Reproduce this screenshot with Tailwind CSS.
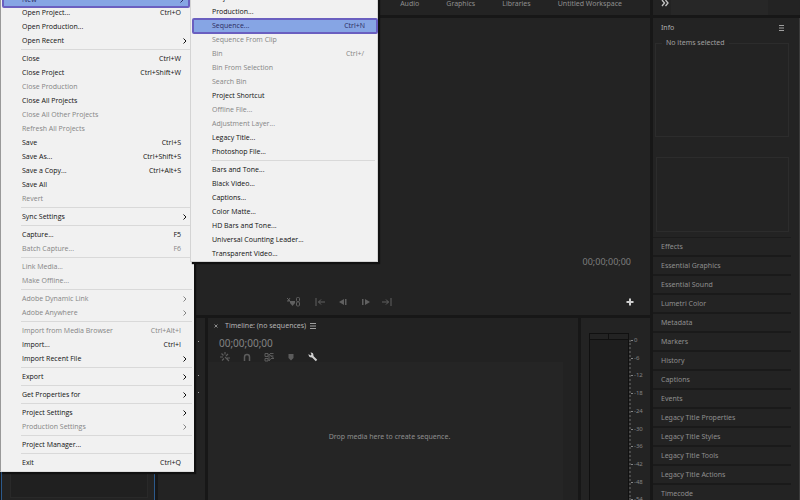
<!DOCTYPE html>
<html lang="en">
<head>
  <meta charset="UTF-8" />
  <meta name="viewport" content="width=device-width, initial-scale=1.0"/>
  <title>Premiere Pro</title>
  <script src="https://cdn.jsdelivr.net/npm/@tailwindcss/browser@4"></script>
</head>
<body class="relative h-screen overflow-hidden flex flex-col bg-[#171717] text-[#8f8f8f] font-['Noto_Sans',sans-serif] text-[7px] leading-[14px]">

  <!-- Workspace bar -->
  <header class="flex h-[15px] shrink-0 gap-[3px] mb-[3px] bg-[#171717]">
    <nav class="flex-1 flex justify-end gap-[27px] pr-7 bg-[#232323]">
      <a href="#" class="-mt-[3px]">Audio</a>
      <a href="#" class="-mt-[3px]">Graphics</a>
      <a href="#" class="-mt-[3px]">Libraries</a>
      <a href="#" class="-mt-[3px]">Untitled Workspace</a>
    </nav>
    <div class="w-[147px] flex bg-[#232323]">
      <button aria-label="More workspaces" class="w-[18px] flex justify-end">
        <svg class="w-2 h-2 mr-[2px] -mt-px" viewBox="0 0 8 8" fill="none" stroke="#c4c4c4" stroke-width="1.3"><path d="M1 1l2.500 3L1 7M4.500 1L7 4 4.500 7"/></svg>
      </button>
      <div class="w-[97px] bg-[#272727]"></div>
    </div>
  </header>

  <main class="flex-1 min-h-0 flex gap-[3px]">
    <div class="flex-1 min-w-0 flex flex-col gap-[3px]">

      <!-- Program monitor -->
      <section class="h-[297px] shrink-0 flex flex-col justify-end bg-[#232323]">
        <div class="flex justify-end pr-[19px] text-[9px] text-[#7d7d7d]">00;00;00;00</div>
        <div class="mt-7 mb-2 flex items-center pl-[286px] pr-4 text-[#606060]">
          <button aria-label="Marker options" class="mr-[14px]">
            <svg class="w-[15px] h-[10px]" viewBox="0 0 15 10" fill="none" stroke="currentColor"><path d="M1 1l3 3M4 1L2 4M1 4h3"/><path d="M4 4h5v2L6.500 9 4 6z" fill="currentColor" stroke="none"/><rect x="10.500" y="0.500" width="3" height="4" rx="1"/><rect x="10.500" y="5" width="3" height="4" rx="1"/></svg>
          </button>
          <button aria-label="Go to in" class="mr-[13px]">
            <svg class="w-[10px] h-[10px]" viewBox="0 0 10 10" fill="none" stroke="currentColor"><path d="M1 1v8M3.500 5H10M6 2.500L3.500 5 6 7.500"/></svg>
          </button>
          <button aria-label="Step back" class="mr-[13px]">
            <svg class="w-[10px] h-[10px]" viewBox="0 0 10 10" fill="currentColor"><path d="M6 2v6L1 5zM7 2h1.500v6H7z"/></svg>
          </button>
          <button aria-label="Step forward" class="mr-[11px]">
            <svg class="w-[10px] h-[10px]" viewBox="0 0 10 10" fill="currentColor"><path d="M4 2v6l5-3zM1 2h1.500v6H1z"/></svg>
          </button>
          <button aria-label="Go to out">
            <svg class="w-[10px] h-[10px]" viewBox="0 0 10 10" fill="none" stroke="currentColor"><path d="M9 1v8M0 5h6.500M4 2.500L6.500 5 4 7.500"/></svg>
          </button>
          <button aria-label="Add button" class="ml-auto">
            <svg class="w-2 h-2" viewBox="0 0 8 8" stroke="#cfcfcf" stroke-width="2"><path d="M4 0.500v7M0.500 4h7"/></svg>
          </button>
        </div>
      </section>

      <div class="flex-1 min-h-0 flex gap-[3px]">
        <!-- Project bin -->
        <section class="w-[154px] shrink-0 ml-px pl-2 pr-[6px] pb-[2px] border-x border-[#2c5a8c] bg-[#232323]">
          <div class="h-full border border-[#292929] bg-[#202020]"></div>
        </section>

        <!-- Tools -->
        <section class="flex-none w-[47px] flex bg-[#232323]">
          <svg class="w-[46px] h-20" viewBox="0 0 46 80" fill="#a0a0a0"><path d="M37 17h1v2h-1zM40 23h1v1h-1zM37 36h1v2h-1zM37 49h1v2h-1zM40 57h1v1h-1zM37 65h1v2h-1zM40 74h1v1h-1z"/></svg>
        </section>

        <!-- Timeline -->
        <section class="flex-1 min-w-0 flex flex-col bg-[#222222]">
          <div class="flex items-center mt-px pl-[6px] text-[#b5b5b5]">
            <button aria-label="Close tab" class="mr-[7px]"><svg class="w-1 h-1" viewBox="0 0 4 4" stroke="#8a8a8a"><path d="M0.500 0.500l3 3M3.500 0.500l-3 3"/></svg></button>
            <span>Timeline: (no sequences)</span>
            <button aria-label="Timeline menu" class="ml-1"><svg class="w-[6px] h-[6px]" viewBox="0 0 6 6" stroke="#a0a0a0"><path d="M0 0.500h6M0 3h6M0 5.500h6"/></svg></button>
          </div>
          <div class="mt-[3px] pl-[11px] text-[10px] text-[#828282]">00;00;00;00</div>
          <div class="flex items-center gap-3 mt-[2px] pl-3 text-[#5c5c5c]">
            <button aria-label="Nest sequences"><svg class="w-[10px] h-[10px]" viewBox="0 0 10 10" stroke="currentColor" stroke-width="1.200"><path d="M0 5h3M1.500 1.500l2 2M5 0v2.500M5 5l4 4M6 4l2-2M7 6h3M2 8.500l2-2"/></svg></button>
            <button aria-label="Snap"><svg class="w-[10px] h-[10px]" viewBox="0 0 10 10" fill="none" stroke="currentColor" stroke-width="1.500"><path d="M2.500 9V5a2.500 2.500 0 0 1 5 0v4"/></svg></button>
            <button aria-label="Linked selection"><svg class="w-[10px] h-[10px]" viewBox="0 0 10 10" fill="none" stroke="currentColor"><path d="M1 1.500h3v3H1zM6 1.500h3.500M1 6.500h3v2.500H1zM5 2v7l2-2.500h3zM6.500 4h3"/></svg></button>
            <button aria-label="Add marker"><svg class="w-[10px] h-[10px]" viewBox="0 0 10 10" fill="currentColor"><path d="M2.500 2h5v4L5 8.500 2.500 6z"/></svg></button>
            <button aria-label="Timeline settings"><svg class="w-[10px] h-[10px]" viewBox="0 0 10 10"><path d="M4 4l4.500 4.500" stroke="#d0d0d0" stroke-width="2"/><path d="M0.500 2L2.500 3.500 3.500 2.500 2.500 0.500Q5.500 0 5.500 3 5.500 5.500 3 5.500 0.500 5 0.500 2z" fill="#d0d0d0"/></svg></button>
          </div>
          <div class="flex-1 flex items-center justify-center mr-[15px] pt-3 pl-2 bg-[#252525]">Drop media here to create sequence.</div>
        </section>

        <!-- Audio meters -->
        <section class="w-[69px] shrink-0 flex pl-2 pt-[15px] overflow-hidden bg-[#232323]">
          <div class="w-10 flex flex-col border border-b-0 border-[#101010] bg-[#1e1e1e]">
            <div class="h-[6px] shrink-0 grid grid-cols-2 divide-x divide-[#101010] border-b border-[#101010] bg-[#232323]"><span></span><span></span></div>
          </div>
          <div class="w-px mt-[7px] border-l-2 border-dotted border-[#484848]"></div>
          <div id="scale" class="flex-1 flex flex-col -mb-[10px] text-[6px] text-[#858585]"></div>
        </section>
      </div>
    </div>

    <!-- Panel stack -->
    <aside class="w-[147px] shrink-0 border-r border-[#3a3a3a] bg-[#232323]">
      <div class="flex items-center justify-between pt-[3px] pl-2 pr-[15px] text-[#b0b0b0]">
        <span>Info</span>
        <button aria-label="Info menu"><svg class="w-[5px] h-[6px]" viewBox="0 0 5 6" stroke="#a0a0a0"><path d="M0 0.500h5M0 3h5M0 5.500h5"/></svg></button>
      </div>
      <fieldset class="h-[101px] ml-[2px] mr-[10px] mt-px px-[6px] border border-[#2c2c2c]">
        <legend class="px-1 text-[#a0a0a0]">No items selected</legend>
      </fieldset>
      <div class="h-[75px] ml-[3px] mr-[10px] mt-5 mb-[5px] border border-[#2c2c2c]"></div>
      <div id="panels" class="mr-2 border-t border-[#1b1b1b]"></div>
    </aside>
  </main>

  <!-- File menu -->
  <div id="fileMenu" role="menu" class="absolute -top-2 left-0 w-[194px] pb-px border-l border-b border-l-[#999999] border-b-[#dddddd] bg-[#f1f1f1] text-[#101010] font-['Open_Sans',sans-serif] shadow-[2px_2px_1px_#111111]"></div>

  <!-- File > New submenu -->
  <div id="newMenu" role="menu" class="absolute -top-[9px] left-[190px] w-[188px] border border-t-0 border-[#d4d4d4] bg-[#f1f1f1] text-[#101010] font-['Open_Sans',sans-serif] shadow-[2px_2px_1px_#111111]"></div>

  <script>
    // [label, shortcut ('>' opens a submenu), state], null is a separator
    const fileItems = [
      ['New', '>', 'new'], ['Open Project...', 'Ctrl+O'], ['Open Production...'], ['Open Recent', '>'],
      null,
      ['Close', 'Ctrl+W'], ['Close Project', 'Ctrl+Shift+W'], ['Close Production', '', 'off'], ['Close All Projects'],
      ['Close All Other Projects', '', 'off'], ['Refresh All Projects', '', 'off'], ['Save', 'Ctrl+S'],
      ['Save As...', 'Ctrl+Shift+S'], ['Save a Copy...', 'Ctrl+Alt+S'], ['Save All'], ['Revert', '', 'off'],
      null,
      ['Sync Settings', '>'],
      null,
      ['Capture...', 'F5'], ['Batch Capture...', 'F6', 'off'],
      null,
      ['Link Media...', '', 'off'], ['Make Offline...', '', 'off'],
      null,
      ['Adobe Dynamic Link', '>', 'off'], ['Adobe Anywhere', '>', 'off'],
      null,
      ['Import from Media Browser', 'Ctrl+Alt+I', 'off'], ['Import...', 'Ctrl+I'], ['Import Recent File', '>'],
      null,
      ['Export', '>'],
      null,
      ['Get Properties for', '>'],
      null,
      ['Project Settings', '>'], ['Production Settings', '>', 'off'],
      null,
      ['Project Manager...'],
      null,
      ['Exit', 'Ctrl+Q']
    ];

    const newItems = [
      ['Project...', 'Ctrl+Alt+N'], ['Production...'], ['Sequence...', 'Ctrl+N', 'on'], ['Sequence From Clip', '', 'off'],
      ['Bin', 'Ctrl+/', 'off'], ['Bin From Selection', '', 'off'], ['Search Bin', '', 'off'], ['Project Shortcut'],
      ['Offline File...', '', 'off'], ['Adjustment Layer...', '', 'off'], ['Legacy Title...'], ['Photoshop File...'],
      null,
      ['Bars and Tone...'], ['Black Video...'], ['Captions...'], ['Color Matte...'], ['HD Bars and Tone...'],
      ['Universal Counting Leader...'], ['Transparent Video...']
    ];

    const rowClass = {
      normal: 'w-full h-[14px] pl-[21px] pr-[13px] font-medium',
      off: 'w-full h-[14px] pl-[21px] pr-[13px] text-[#858585]',
      on: 'w-[186px] h-4 -my-px ml-px pl-[18px] pr-[11px] border-2 border-[#6a5fc0] rounded-xs bg-[#86a5e4] text-[#2b2b60]',
      new: 'w-[188px] h-4 -mb-[2px] ml-px pl-[18px] pr-[10px] border-2 border-[#6a5fc0] rounded-xs bg-[#86a5e4] text-[#2b2b60]'
    };

    const arrow = '<svg class="w-[5px] h-[6px] -mr-[6px]" viewBox="0 0 5 6" fill="none" stroke="currentColor"><path d="M1.500 0.500L4 3 1.500 5.500"/></svg>';

    function renderMenu(id, items) {
      document.getElementById(id).innerHTML = items.map(item => {
        if (!item) return '<div role="separator" class="h-1 ml-5 mr-[2px] pt-px"><div class="h-px bg-[#d9d9d9]"></div></div>';
        const [label, key = '', state = 'normal'] = item;
        return `<button role="menuitem" class="flex items-center justify-between ${rowClass[state]}">
          <span>${label}</span>${key === '>' ? arrow : `<span>${key}</span>`}
        </button>`;
      }).join('');
    }

    renderMenu('fileMenu', fileItems);
    renderMenu('newMenu', newItems);

    document.getElementById('panels').innerHTML = [
      'Effects', 'Essential Graphics', 'Essential Sound', 'Lumetri Color', 'Metadata', 'Markers', 'History',
      'Captions', 'Events', 'Legacy Title Properties', 'Legacy Title Styles', 'Legacy Title Tools',
      'Legacy Title Actions', 'Timecode'
    ].map(name => `<button class="block w-full h-[19px] pl-2 text-left border-b-2 border-[#1a1a1a]">${name}</button>`).join('');

    document.getElementById('scale').innerHTML = [0, -6, -12, -18, -24, -30, -36, -42, -48, -54]
      .map(db => `<div class="flex-1 flex items-start gap-px"><span class="w-[2px] h-px mt-[7px] bg-[#858585]"></span>${db}</div>`).join('');
  </script>
</body>
</html>
